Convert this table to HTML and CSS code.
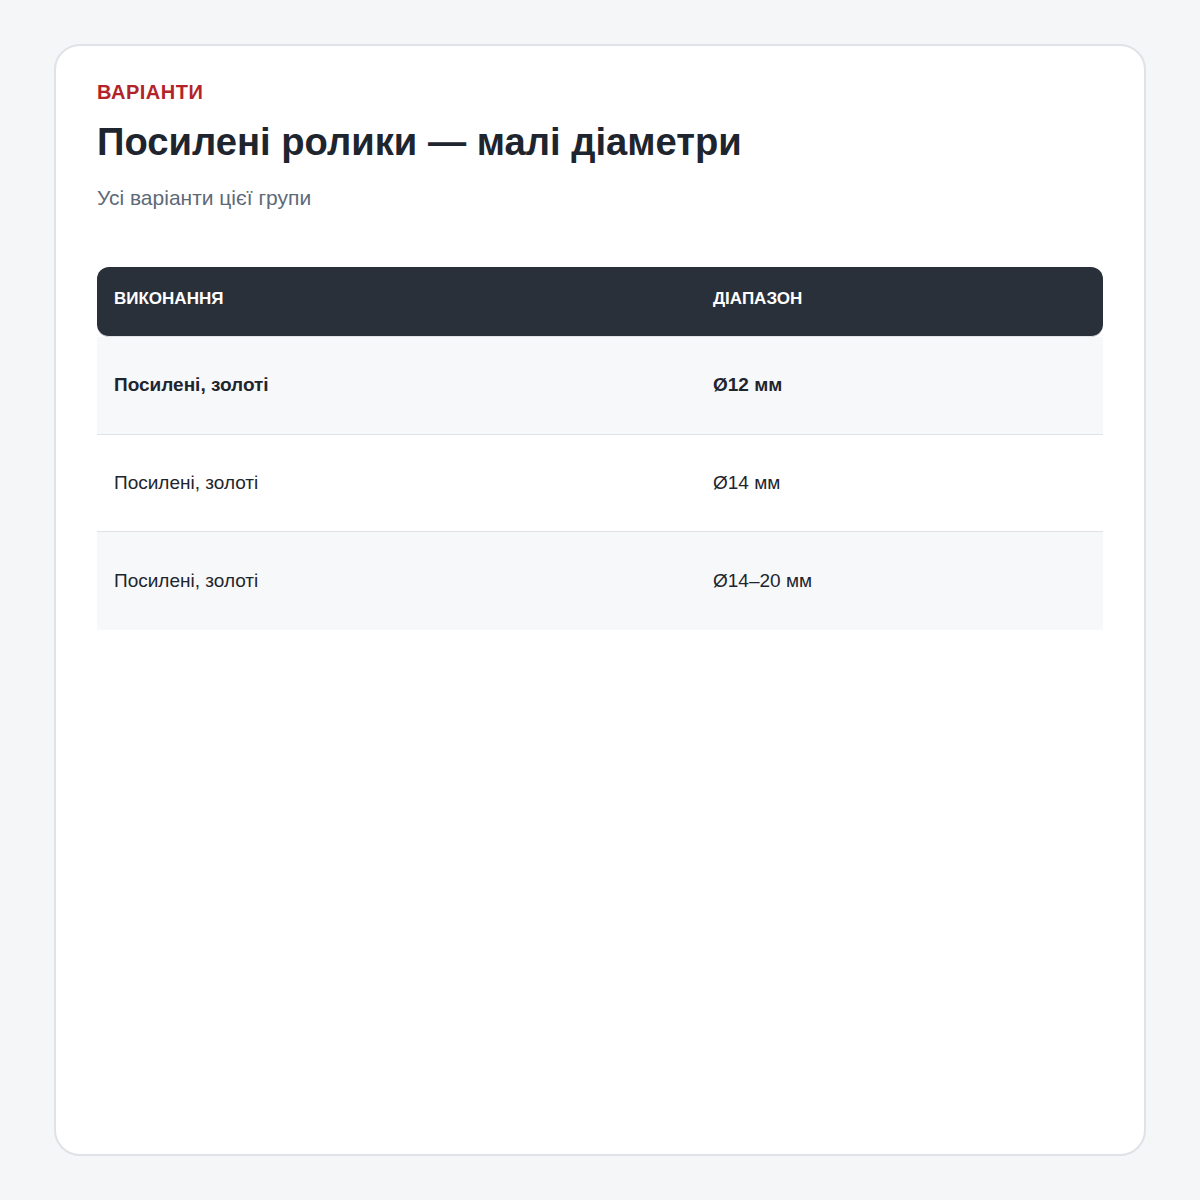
FILE: index.html
```html
<!DOCTYPE html>
<html lang="uk">
<head>
<meta charset="utf-8">
<link rel="stylesheet" href="styles.css">
</head>
<body>
<main class="card">
  <div class="eyebrow">ВАРІАНТИ</div>
  <h1 class="title">Посилені ролики — малі діаметри</h1>
  <p class="subtitle">Усі варіанти цієї групи</p>
  <div class="table">
    <div class="head">
      <div class="cell">ВИКОНАННЯ</div>
      <div class="cell">ДІАПАЗОН</div>
    </div>
    <div class="row alt strong">
      <div class="cell">Посилені, золоті</div>
      <div class="cell">Ø12 мм</div>
    </div>
    <div class="row">
      <div class="cell">Посилені, золоті</div>
      <div class="cell">Ø14 мм</div>
    </div>
    <div class="row alt last">
      <div class="cell">Посилені, золоті</div>
      <div class="cell">Ø14–20 мм</div>
    </div>
  </div>
</main>
</body>
</html>
```
FILE: styles.css
```css
* { box-sizing: border-box; }
html, body { margin: 0; padding: 0; }
body {
  background: #f5f6f8;
  font-family: "Liberation Sans", Arial, sans-serif;
  padding: 44px 54px;
}
.card {
  background: #fff;
  border: 2px solid #dfe2e7;
  border-radius: 26px;
  height: 1112px;
  padding: 32px 41px;
}
.eyebrow {
  color: #b3232a;
  font-weight: 700;
  font-size: 20px;
  line-height: 28px;
  letter-spacing: 0.5px;
}
.title {
  margin: 12px 0 0;
  font-size: 38.2px;
  line-height: 48px;
  font-weight: 700;
  color: #1e252e;
}
.subtitle {
  margin: 17px 0 0;
  font-size: 21px;
  line-height: 30px;
  color: #5e6977;
}
.table {
  margin-top: 54px;
}
.head, .row {
  display: grid;
  grid-template-columns: 599px 1fr;
  align-items: center;
}
.head {
  background: #2a3039;
  border-radius: 12px;
  height: 70px;
  padding-bottom: 5px;
  color: #fff;
  font-weight: 700;
  font-size: 17px;
  border-bottom: 1px solid #dfe2e7;
}
.cell { padding: 0 17px; }
.row {
  height: 97.5px;
  font-size: 19px;
  color: #1e252e;
  border-bottom: 1px solid #dfe2e7;
}
.row.alt { background: #f7f8fa; }
.row.last { border-bottom: none; }
.row.strong { font-weight: 700; }
```
